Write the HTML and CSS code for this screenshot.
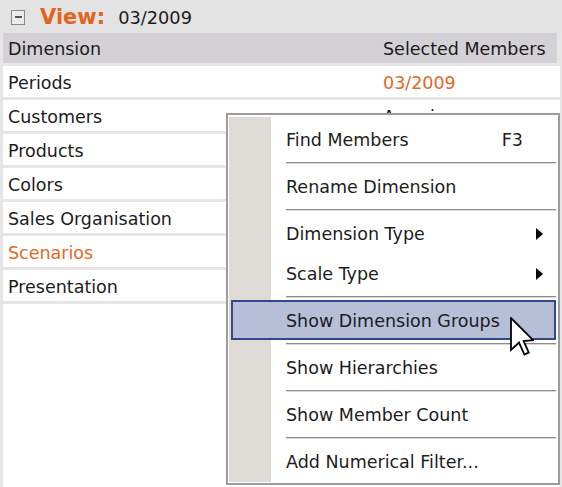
FILE: index.html
```html
<!DOCTYPE html>
<html>
<head>
<meta charset="utf-8">
<link rel="stylesheet" href="styles.css">
</head>
<body>
<div class="page">
  <div class="viewbar">
    <span class="toggle"><span class="minus"></span></span>
    <span class="view-label">View:</span>
    <span class="view-value">03/2009</span>
  </div>
  <div class="grid">
    <div class="row head"><span class="c1">Dimension</span><span class="c2">Selected Members</span></div>
    <div class="row"><span class="c1">Periods</span><span class="c2 orange">03/2009</span></div>
    <div class="row"><span class="c1">Customers</span><span class="c2">Americas</span></div>
    <div class="row"><span class="c1">Products</span><span class="c2"></span></div>
    <div class="row"><span class="c1">Colors</span><span class="c2"></span></div>
    <div class="row"><span class="c1">Sales Organisation</span><span class="c2"></span></div>
    <div class="row"><span class="c1 orange">Scenarios</span><span class="c2"></span></div>
    <div class="row"><span class="c1">Presentation</span><span class="c2"></span></div>
    <div class="filler"></div>
  </div>

  <div class="menu">
    <div class="item"><span>Find Members</span><span class="key">F3</span></div>
    <div class="sep"></div>
    <div class="item"><span>Rename Dimension</span></div>
    <div class="sep"></div>
    <div class="item"><span>Dimension Type</span><svg class="sub" width="7" height="12" viewBox="0 0 7 12"><path d="M0 0 L7 6 L0 12 Z" fill="#000"/></svg></div>
    <div class="item"><span>Scale Type</span><svg class="sub" width="7" height="12" viewBox="0 0 7 12"><path d="M0 0 L7 6 L0 12 Z" fill="#000"/></svg></div>
    <div class="sep"></div>
    <div class="item active"><span>Show Dimension Groups</span></div>
    <div class="sep"></div>
    <div class="item"><span>Show Hierarchies</span></div>
    <div class="sep"></div>
    <div class="item"><span>Show Member Count</span></div>
    <div class="sep"></div>
    <div class="item"><span>Add Numerical Filter...</span></div>
  </div>

  <svg class="cursor" width="24" height="40" viewBox="0 0 12 20">
    <path d="M0.5 0.5 L0.5 16.5 L4.5 12.8 L7.2 18.8 L9.4 17.8 L6.8 12 L11.6 11.6 Z" fill="#fff" stroke="#000" stroke-width="0.9" stroke-linejoin="miter"/>
  </svg>
</div>
</body>
</html>
```

FILE: styles.css
```css
* { box-sizing: border-box; }
html, body { margin: 0; padding: 0; }
body {
  font-family: "DejaVu Sans", Verdana, sans-serif;
  font-size: 17.5px;
  color: #1c1c1c;
  background: #e6e6e6;
}
.page {
  position: relative;
  width: 562px;
  height: 487px;
  overflow: hidden;
  background: #e6e6e6;
  display: flex;
  flex-direction: column;
}
.viewbar {
  height: 33px;
  flex: none;
  display: flex;
  align-items: center;
  padding-left: 11px;
  background: #e3e3e3;
}
.toggle {
  width: 14px;
  height: 15px;
  border: 1px solid #8a8a8a;
  background: #ececec;
  display: flex;
  align-items: center;
  justify-content: center;
  margin-top: 1px;
}
.minus {
  width: 7px;
  height: 2px;
  background: #555;
}
.view-label {
  font-weight: bold;
  font-size: 21px;
  color: #e2641c;
  margin-left: 15px;
  padding-top: 1px;
}
.view-value {
  margin-left: 13px;
  padding-top: 1px;
  font-size: 17.8px;
}
.grid {
  flex: 1;
  display: flex;
  flex-direction: column;
  gap: 3px;
  padding-left: 3px;
  width: 560px;
}
.row {
  height: 31px;
  flex: none;
  display: flex;
  align-items: center;
  background: #fff;
  padding-top: 2px;
}
.row.head {
  height: 30px;
  background: #d3d1d5;
  margin-right: 3px;
}
.c1 {
  width: 380px;
  padding-left: 5px;
  white-space: nowrap;
}
.c2 { white-space: nowrap; }
.orange { color: #e2681f; }
.filler {
  flex: 1;
  background: #fff;
}
.menu {
  position: absolute;
  left: 226px;
  top: 113px;
  width: 334px;
  height: 372px;
  border: 2px solid #9c9c9c;
  padding: 2px;
  background: #fff;
  display: flex;
  flex-direction: column;
}
.menu::before {
  content: "";
  position: absolute;
  left: 1px;
  top: 2px;
  bottom: 1px;
  width: 42px;
  background: #dedbd6;
}
.item {
  position: relative;
  height: 40px;
  flex: none;
  display: flex;
  align-items: center;
  padding-left: 56px;
  padding-top: 1px;
  white-space: nowrap;
}
.menu > .item:first-child { margin-top: 2px; }
.key {
  margin-left: auto;
  margin-right: 33px;
}
.sub {
  margin-left: auto;
  margin-right: 13px;
}
.item.active {
  background: #b6bed8;
  border: 2px solid #34498a;
  margin-left: 1px;
  margin-right: 0;
  padding-left: 53px;
}
.sep {
  height: 7px;
  flex: none;
  margin-left: 56px;
  display: flex;
  align-items: center;
}
.sep::after {
  content: "";
  display: block;
  width: 100%;
  height: 1px;
  background: #8e8e8e;
  box-shadow: 0 1px 0 #d6d6d6;
}
.cursor {
  position: absolute;
  left: 510px;
  top: 317px;
}
```
